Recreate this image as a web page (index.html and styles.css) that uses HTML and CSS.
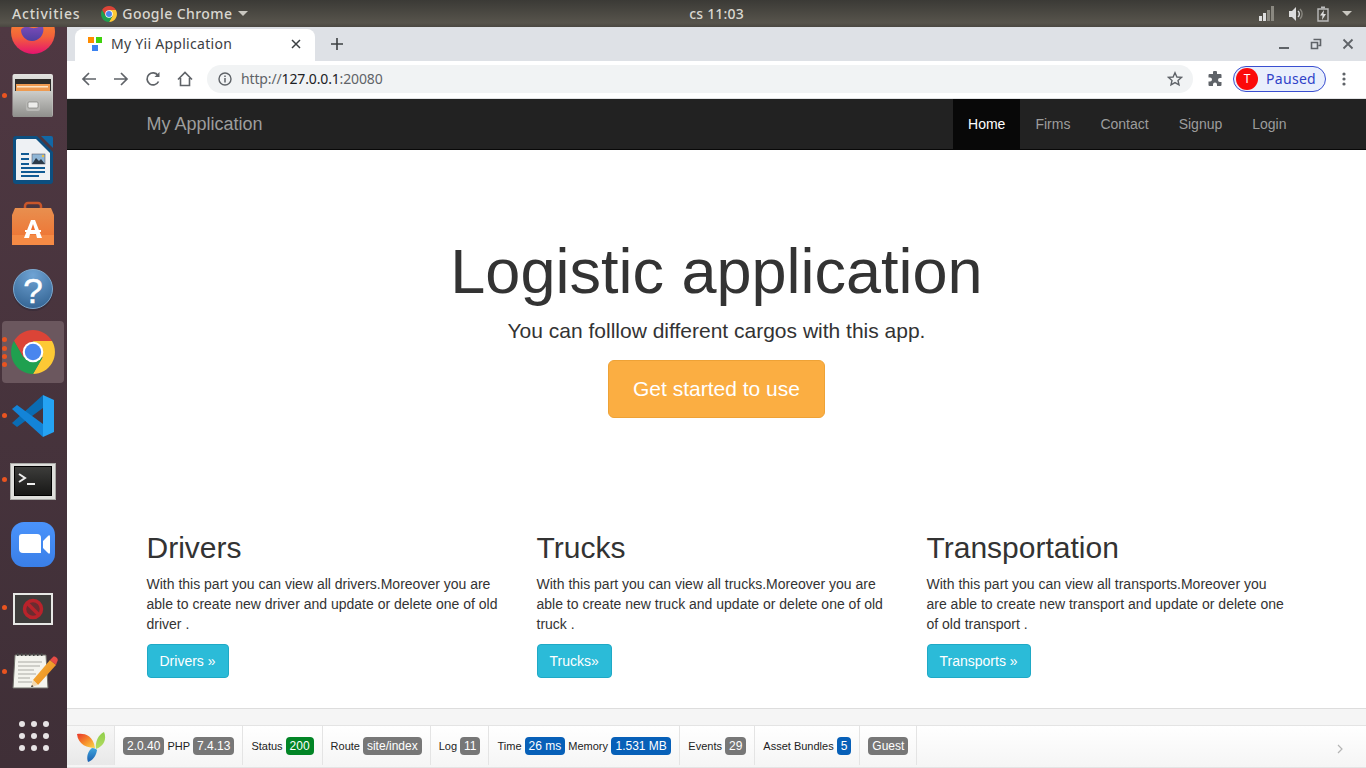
FILE: index.html
```html
<!DOCTYPE html>
<html lang="en">
<head>
<meta charset="utf-8">
<title>My Yii Application</title>
<link rel="stylesheet" href="styles.css">
</head>
<body>
<svg class="defs" width="0" height="0" aria-hidden="true">
  <defs>
    <symbol id="chrome" viewBox="11 10 44 44">
      <path fill="#db4437" d="M52 21A22 22 0 0 0 14 21L23.5 37.5 33 21Z"/>
      <path fill="#fdc935" d="M52 21A22 22 0 0 1 33 54L42.5 37.5 33 21Z"/>
      <path fill="#1fa04f" d="M33 54A22 22 0 0 1 14 21L23.5 37.5 42.5 37.5Z"/>
      <circle cx="33" cy="32" r="10.3" fill="#fff"/>
      <circle cx="33" cy="32" r="8.2" fill="#4a86ee"/>
    </symbol>
    <linearGradient id="ffx" x1="0" y1="0" x2="0" y2="1"><stop offset="0" stop-color="#f9a02a"/><stop offset=".6" stop-color="#f4623a"/><stop offset="1" stop-color="#e5136f"/></linearGradient>
    <linearGradient id="ffin" x1="0" y1="0" x2="0" y2="1"><stop offset="0" stop-color="#7a4bb8"/><stop offset="1" stop-color="#4f3fa0"/></linearGradient>
    <linearGradient id="frame" x1="0" y1="0" x2="0" y2="1"><stop offset="0" stop-color="#e2e2df"/><stop offset="1" stop-color="#a9a9a6"/></linearGradient>
    <linearGradient id="drawer" x1="0" y1="0" x2="0" y2="1"><stop offset="0" stop-color="#cdcdca"/><stop offset="1" stop-color="#8f8f8c"/></linearGradient>
    <linearGradient id="bag" x1="0" y1="0" x2="0" y2="1"><stop offset="0" stop-color="#e88f4f"/><stop offset="1" stop-color="#f0702f"/></linearGradient>
    <radialGradient id="help" cx=".5" cy=".15" r=".95"><stop offset="0" stop-color="#6fa3d4"/><stop offset="1" stop-color="#2f5f8e"/></radialGradient>
    <linearGradient id="term" x1="0" y1="0" x2="0" y2="1"><stop offset="0" stop-color="#3d3d3b"/><stop offset="1" stop-color="#171716"/></linearGradient>
    <linearGradient id="zoomg" x1="0" y1="0" x2="0" y2="1"><stop offset="0" stop-color="#4a93fb"/><stop offset="1" stop-color="#3a7fe8"/></linearGradient>
    <linearGradient id="pencil" x1="0" y1="0" x2="1" y2="1"><stop offset="0" stop-color="#f7b13c"/><stop offset="1" stop-color="#e98a1a"/></linearGradient>
  </defs>
</svg>

<header class="topbar">
  <div class="top-left">
    <span class="top-text activities">Activities</span>
    <span class="app-menu">
      <svg class="top-chrome" width="16" height="16"><use href="#chrome"/></svg>
      <span class="top-text app-name">Google Chrome</span>
      <span class="caret"></span>
    </span>
  </div>
  <span class="top-text clock">cs 11:03</span>
  <div class="top-right">
    <svg width="16" height="16" viewBox="0 0 16 16"><rect x="0" y="10" width="3" height="5" fill="#ddd"/><rect x="4" y="7" width="3" height="8" fill="#ddd"/><rect x="8" y="4" width="3" height="11" fill="#8a8880"/><rect x="12" y="0" width="3" height="15" fill="#8a8880"/></svg>
    <svg width="16" height="16" viewBox="0 0 16 16"><path fill="#ddd" d="M1 5h3l4-4v14l-4-4H1z"/><path fill="none" stroke="#ddd" stroke-width="1.4" d="M10 5a4 4 0 0 1 0 6"/><path fill="none" stroke="#8a8880" stroke-width="1.4" d="M12 3a7 7 0 0 1 0 10"/></svg>
    <svg width="12" height="16" viewBox="0 0 12 16"><path fill="none" stroke="#bbb" stroke-width="1.4" d="M1 3h10v12H1z"/><rect x="4" y="0.5" width="4" height="2" fill="#bbb"/><path fill="#ddd" d="M7 4 3 9.500h2.500L5 14l4-6H6.500z"/></svg>
    <span class="caret right-caret"></span>
  </div>
</header>

<div class="desktop">
  <nav class="dock">
    <div class="dock-inner">
      <div class="slot">
        <svg width="67" height="64"><circle cx="33" cy="32" r="22" fill="url(#ffx)"/><path fill="url(#ffin)" d="M21 30c3-5 8-3 11-2 4 1 9-3 11-1 2 6-3 14-11 14-6 0-11-5-11-11z"/></svg>
      </div>
      <div class="slot">
        <span class="pip pip-mid"></span>
        <svg width="67" height="64" viewBox="0 0 67 64"><rect x="12.500" y="10" width="40.500" height="43" rx="2" fill="url(#frame)"/><rect x="15" y="15" width="36" height="13" fill="#2d2c2a"/><rect x="16" y="20" width="34" height="7" fill="#ee9a50"/><rect x="17" y="22" width="31" height="1.500" fill="#fbe3c4"/><rect x="13" y="27" width="39" height="26" rx="1" fill="url(#drawer)"/><rect x="26" y="36" width="14" height="11" rx="2" fill="#b9b9b6"/><rect x="28" y="38" width="10" height="6" rx="1" fill="#ededeb" stroke="#6d6d6a" stroke-width=".6"/></svg>
      </div>
      <div class="slot">
        <svg width="67" height="64" viewBox="0 0 67 64"><path fill="#0d4f80" d="M16 8h21l16 16v29a3 3 0 0 1-3 3H16a3 3 0 0 1-3-3V11a3 3 0 0 1 3-3z"/><path fill="#eef1f4" d="M17 11h19l14 14v27H16V12z"/><path fill="#1268a6" d="M41 8h10a2 2 0 0 1 2 2v10z"/><path fill="#0f5a94" d="M21 25h8v2h-8zM21 30h8v2h-8zM21 35h8v2h-8zM21 39h24v2H21zM21 43h24v2H21zM21 47h18v2H21z"/><rect x="32" y="26" width="13" height="10" fill="#8fb6d6" stroke="#445"  stroke-width=".5"/><path fill="#2c3b4a" d="M32 36l4-6 3 3 2-2 4 5z"/><circle cx="43" cy="28" r="1.200" fill="#f0c040"/></svg>
      </div>
      <div class="slot">
        <svg width="67" height="64" viewBox="0 0 67 64"><path fill="none" stroke="#c9562a" stroke-width="2.500" d="M25 22v-8a3 3 0 0 1 3-3h10a3 3 0 0 1 3 3v8"/><path fill="url(#bag)" d="M15 16h36l3 7v30H12V23z"/><path fill="#f58a45" d="M12 43h42v10H12z"/><path fill="#fff" d="M31 28h4l7 18h-5l-1-4h-6l-1 4h-5z"/><path fill="#f0702f" d="M33 32l-2 6h4z"/><rect x="25" y="38" width="16" height="2" fill="#fff"/></svg>
      </div>
      <div class="slot">
        <svg width="67" height="64" viewBox="0 0 67 64"><circle cx="33" cy="35" r="20" fill="#1f1f2f" opacity=".3"/><circle cx="33" cy="33" r="19.500" fill="url(#help)" stroke="#7da9cf"/><text class="help-q" x="33" y="47" text-anchor="middle">?</text></svg>
      </div>
      <div class="slot slot-active">
        <span class="pip pip-a"></span><span class="pip pip-b"></span><span class="pip pip-c"></span><span class="pip pip-d"></span>
        <svg class="chrome-big" width="44" height="44"><use href="#chrome"/></svg>
      </div>
      <div class="slot">
        <span class="pip pip-mid"></span>
        <svg width="67" height="64" viewBox="0 0 67 64"><path fill="#0a6cb3" d="M43 11V24L17 43 12 39Z"/><path fill="#1384d8" d="M12 25 17 21 43 40V53Z"/><path fill="#25a3f3" d="M43 11 54 16V48L43 53Z"/></svg>
      </div>
      <div class="slot">
        <span class="pip pip-mid"></span>
        <svg width="67" height="64" viewBox="0 0 67 64"><rect x="10.500" y="15.500" width="45" height="36" fill="#dededb" stroke="#a9a9a6"/><rect x="14.500" y="18.500" width="37" height="29" fill="url(#term)" stroke="#000"/><path fill="none" stroke="#eee" stroke-width="2" d="M19 26l6 4-6 4"/><rect x="27" y="35" width="8" height="2" fill="#eee"/></svg>
      </div>
      <div class="slot">
        <svg width="67" height="64" viewBox="0 0 67 64"><rect x="11" y="10" width="44" height="45" rx="13" fill="url(#zoomg)"/><path fill="#fff" d="M19 25a3 3 0 0 1 3-3h15a4 4 0 0 1 4 4v15H23a4 4 0 0 1-4-4zM43 29l5-5c1-1 2-1 2 1v15c0 2-1 2-2 1l-5-5z"/></svg>
      </div>
      <div class="slot">
        <span class="pip pip-mid"></span>
        <svg width="67" height="64" viewBox="0 0 67 64"><rect x="13" y="17" width="40" height="32" fill="#e8e8e6"/><rect x="15" y="19" width="36" height="28" fill="#3e3c3b"/><circle cx="33" cy="33" r="8.500" fill="#6a2c30" stroke="#b8232b" stroke-width="3.500"/><path stroke="#b8232b" stroke-width="3.500" d="M27 27l12 12"/></svg>
      </div>
      <div class="slot">
        <span class="pip pip-mid"></span>
        <svg width="67" height="64" viewBox="0 0 67 64"><g transform="translate(0 2)"><path fill="#f4f4ee" stroke="#6e6e68" d="M15 13h31l2 33H13z"/><path stroke="#444" stroke-width="3" stroke-dasharray="1.500 2.500" d="M17 12.500h28"/><path stroke="#a9a9a3" stroke-width="1.200" d="M18 20h24M18 24h22M18 28h16M18 32h18M18 36h12M18 40h14"/><path fill="url(#pencil)" d="M33 38l17-20 6 5-18 20z"/><path fill="#e64b45" d="M50 18l3-3c1-1 3 0 4 1s1 3 0 4l-1 3z"/><path fill="#f2d9b0" d="M33 38l5 5-7 2z"/><path fill="#222" d="M31 45l1-2 1.500 1.500z"/></g></svg>
      </div>
      <div class="slot slot-grid">
        <span></span><span></span><span></span><span></span><span></span><span></span><span></span><span></span><span></span>
      </div>
    </div>
  </nav>

  <div class="browser">
    <div class="tabstrip">
      <div class="tab">
        <span class="favicon"><i class="fav-o"></i><i class="fav-g"></i><i class="fav-b"></i></span>
        <span class="tab-title">My Yii Application</span>
        <svg class="tab-close" width="10" height="10" viewBox="0 0 10 10"><path stroke="#3c4043" stroke-width="1.500" d="M1 1l8 8M9 1l-8 8"/></svg>
      </div>
      <svg class="new-tab" width="14" height="14" viewBox="0 0 14 14"><path stroke="#3c4043" stroke-width="1.600" d="M7 1v12M1 7h12"/></svg>
      <div class="win-controls">
        <svg width="12" height="12" viewBox="0 0 12 12"><path stroke="#5f6368" stroke-width="2" d="M1 10h10"/></svg>
        <svg width="12" height="12" viewBox="0 0 12 12"><path fill="none" stroke="#5f6368" stroke-width="1.600" d="M3.500 1.500h7v6h-2M1.500 4.500h6v6h-6z"/></svg>
        <svg width="12" height="12" viewBox="0 0 12 12"><path stroke="#5f6368" stroke-width="1.800" d="M1.500 1.500l9 9M10.500 1.500l-9 9"/></svg>
      </div>
    </div>
    <div class="toolbar">
      <svg class="tool" width="16" height="16" viewBox="0 0 16 16"><path fill="none" stroke="#5f6368" stroke-width="1.700" d="M15 8H2M8 2 2 8l6 6"/></svg>
      <svg class="tool" width="16" height="16" viewBox="0 0 16 16"><path fill="none" stroke="#5f6368" stroke-width="1.700" d="M1 8h13M8 2l6 6-6 6"/></svg>
      <svg class="tool" width="16" height="16" viewBox="0 0 16 16"><path fill="none" stroke="#5f6368" stroke-width="1.700" d="M13.500 10.500A6 6 0 1 1 13 4.500"/><path fill="#5f6368" d="M14.500 1v5h-5z"/></svg>
      <svg class="tool" width="16" height="16" viewBox="0 0 16 16"><path fill="none" stroke="#5f6368" stroke-width="1.600" d="M1 8.500 8 1.500l7 7M3.500 7v7.500h9V7"/></svg>
      <div class="omnibox">
        <svg class="info" width="14" height="14" viewBox="0 0 14 14"><circle cx="7" cy="7" r="6" fill="none" stroke="#5f6368" stroke-width="1.400"/><path stroke="#5f6368" stroke-width="1.500" d="M7 6v4.500M7 3.500v1.500"/></svg>
        <span class="url"><span class="url-dim">http://</span>127.0.0.1<span class="url-dim">:20080</span></span>
        <svg class="star" width="16" height="16" viewBox="0 0 16 16"><path fill="none" stroke="#5f6368" stroke-width="1.400" d="M8 1.800l1.900 4.200 4.500.4-3.400 3 1 4.500L8 11.600l-4 2.300 1-4.500-3.400-3 4.500-.4z"/></svg>
      </div>
      <svg class="puzzle" width="16" height="16" viewBox="0 0 16 16"><path fill="#5f6368" d="M6 1.500a2 2 0 0 1 4 0V3h3.500a1 1 0 0 1 1 1v3H13a2 2 0 0 0 0 4h1.500v3a1 1 0 0 1-1 1H10v-1.500a2 2 0 0 0-4 0V15H2.500a1 1 0 0 1-1-1v-3.500H3a2 2 0 0 0 0-4H1.500V4a1 1 0 0 1 1-1H6z"/></svg>
      <div class="profile"><span class="avatar">T</span><span class="paused">Paused</span></div>
      <svg class="kebab" width="4" height="14" viewBox="0 0 4 14"><circle cx="2" cy="2" r="1.600" fill="#5f6368"/><circle cx="2" cy="7" r="1.600" fill="#5f6368"/><circle cx="2" cy="12" r="1.600" fill="#5f6368"/></svg>
    </div>

    <main class="viewport">
      <div class="navbar">
        <div class="container nav-row">
          <a class="brand">My Application</a>
          <ul class="nav">
            <li class="active">Home</li>
            <li>Firms</li>
            <li>Contact</li>
            <li>Signup</li>
            <li>Login</li>
          </ul>
        </div>
      </div>

      <section class="jumbotron">
        <h1>Logistic application</h1>
        <p class="lead">You can folllow different cargos with this app.</p>
        <a class="btn btn-lg">Get started to use</a>
      </section>

      <section class="container columns">
        <div class="col">
          <h2>Drivers</h2>
          <p>With this part you can view all drivers.Moreover you are able to create new driver and update or delete one of old driver .</p>
          <a class="btn btn-info">Drivers »</a>
        </div>
        <div class="col">
          <h2>Trucks</h2>
          <p>With this part you can view all trucks.Moreover you are able to create new truck and update or delete one of old truck .</p>
          <a class="btn btn-info">Trucks»</a>
        </div>
        <div class="col">
          <h2>Transportation</h2>
          <p>With this part you can view all transports.Moreover you are able to create new transport and update or delete one of old transport .</p>
          <a class="btn btn-info">Transports »</a>
        </div>
      </section>

      <div class="footer"></div>

      <div class="debug">
        <div class="dbg-block dbg-logo">
          <svg width="32" height="32" viewBox="0 0 32 32">
            <defs>
              <linearGradient id="y1" x1="0" y1="0" x2="1" y2="1"><stop offset="0" stop-color="#e8352c"/><stop offset=".55" stop-color="#f7902a"/><stop offset="1" stop-color="#f9d84e"/></linearGradient>
              <linearGradient id="y2" x1="0" y1="0" x2="0" y2="1"><stop offset="0" stop-color="#8fce4a"/><stop offset="1" stop-color="#b4dc62"/></linearGradient>
              <linearGradient id="y3" x1="0" y1="0" x2="0" y2="1"><stop offset="0" stop-color="#3fa5dd"/><stop offset="1" stop-color="#1a5fb0"/></linearGradient>
            </defs>
            <path fill="url(#y1)" d="M2 3c6-1 16 0 18 14-7 0-17-3-18-14z"/>
            <path fill="url(#y2)" d="M29 1c3 7 0 14-8 17-1-7 2-14 8-17z"/>
            <path fill="url(#y3)" d="M17 17c3 0 4 1 5 2-1 6-4 10-9 12-2-5 0-11 4-14z"/>
          </svg>
        </div>
        <div class="dbg-block"><span class="lbl">2.0.40</span><span class="dbg-text">PHP</span><span class="lbl">7.4.13</span></div>
        <div class="dbg-block"><span class="dbg-text">Status</span><span class="lbl lbl-green">200</span></div>
        <div class="dbg-block"><span class="dbg-text">Route</span><span class="lbl">site/index</span></div>
        <div class="dbg-block"><span class="dbg-text">Log</span><span class="lbl">11</span></div>
        <div class="dbg-block"><span class="dbg-text">Time</span><span class="lbl lbl-blue">26 ms</span><span class="dbg-text">Memory</span><span class="lbl lbl-blue lbl-wide">1.531 MB</span></div>
        <div class="dbg-block"><span class="dbg-text">Events</span><span class="lbl">29</span></div>
        <div class="dbg-block"><span class="dbg-text">Asset Bundles</span><span class="lbl lbl-blue">5</span></div>
        <div class="dbg-block"><span class="lbl">Guest</span></div>
        <svg class="dbg-chevron" width="7" height="10" viewBox="0 0 7 10"><path fill="none" stroke="#b5b5b5" stroke-width="1.200" d="M1 1l4 4-4 4"/></svg>
      </div>
    </main>
  </div>
</div>
</body>
</html>
```

FILE: styles.css
```css
* { box-sizing: border-box; }
html, body { margin: 0; height: 100%; }
body {
  width: 1366px;
  height: 768px;
  overflow: hidden;
  display: flex;
  flex-direction: column;
  font-family: "Liberation Sans", Arial, sans-serif;
  font-size: 14px;
  line-height: 20px;
  color: #333;
}
.defs { display: block; height: 0; }

/* Ubuntu top bar */
.topbar {
  height: 27px;
  flex: none;
  display: grid;
  grid-template-columns: 1fr auto 622px;
  align-items: center;
  background: linear-gradient(#3b3a36, #57544c 85%, #4a4741);
}
.top-left { display: flex; align-items: center; padding-left: 12px; }
.top-text { font-family: "Noto Sans", sans-serif; font-weight: 500; font-size: 14px; color: #d9d7d0; letter-spacing: .2px; }
.activities { letter-spacing: .8px; }
.app-name { letter-spacing: .42px; }
.app-menu { display: flex; align-items: center; margin-left: 21px; }
.top-chrome { margin-right: 5px; }
.caret { width: 0; height: 0; border: 5px solid transparent; border-top: 5px solid #c9c7c0; border-bottom: 0; margin-left: 6px; }
.clock { text-align: center; }
.top-right { display: flex; align-items: center; justify-content: flex-end; gap: 13px; padding-right: 14px; }
.right-caret { margin-left: 0; }

/* Dock */
.desktop { flex: 1; display: flex; min-height: 0; }
.dock { width: 67px; flex: none; overflow: hidden; background: linear-gradient(#4f3842, #3f2f37); }
.dock-inner { margin-top: -27px; }
.slot { position: relative; height: 64px; }
.slot svg { display: block; }
.help-q { font-family: "Liberation Sans", sans-serif; font-size: 35px; fill: #fff; stroke: #fff; stroke-width: .5px; }
.slot-active::before {
  content: "";
  position: absolute;
  left: 2px; top: 1px;
  width: 62px; height: 62px;
  border-radius: 4px;
  background: #6b575e;
}
.chrome-big { position: absolute; left: 11px; top: 10px; }
.pip { position: absolute; left: 2px; width: 5px; height: 5px; border-radius: 50%; background: #e95420; z-index: 1; }
.pip-mid { top: 29px; }
.pip-a { top: 17px; }
.pip-b { top: 26px; }
.pip-c { top: 34px; }
.pip-d { top: 42px; }
.slot-grid {
  display: grid;
  grid-template-columns: repeat(3, 6px);
  grid-auto-rows: 6px;
  gap: 6px;
  justify-content: center;
  align-content: center;
}
.slot-grid span { border-radius: 50%; background: #e6e3e4; }

/* Chrome */
.browser { flex: 1; min-width: 0; display: flex; flex-direction: column; }
.tabstrip { height: 34px; flex: none; display: flex; align-items: flex-end; background: #dee1e6; padding-left: 8px; }
.tab {
  position: relative;
  width: 240px;
  height: 32px;
  display: flex;
  align-items: center;
  padding: 0 14px 2px 13px;
  background: #fff;
  border-radius: 8px 8px 0 0;
}
.favicon { position: relative; width: 14px; height: 14px; flex: none; }
.favicon i { position: absolute; width: 6px; height: 6px; }
.fav-o { left: 0; top: 0; background: #ff8c00; }
.fav-g { right: 0; top: 0; background: #3fd20d; }
.fav-b { left: 4px; bottom: 0; background: #3b82f0; }
.tab-title { flex: 1; margin-left: 9px; font-family: "Noto Sans", sans-serif; font-size: 14px; letter-spacing: .28px; color: #3c4043; }
.new-tab { margin: 0 0 10px 15px; }
.win-controls { margin-left: auto; display: flex; gap: 20px; padding-right: 12px; align-self: center; }
.toolbar { height: 38px; flex: none; display: flex; align-items: center; background: #fff; border-bottom: 1px solid #e2e3e5; padding: 0 0 1px 14px; }
.tool { margin-right: 16px; flex: none; }
.omnibox {
  width: 986px;
  height: 28px;
  margin-left: -2px;
  display: flex;
  align-items: center;
  padding: 0 10px 0 11px;
  background: #f1f3f4;
  border-radius: 14px;
  flex: none;
}
.info { flex: none; }
.url { flex: 1; margin-left: 9px; font-family: "Noto Sans", sans-serif; font-size: 14px; letter-spacing: -.14px; color: #202124; }
.url-dim { color: #5f6368; }
.puzzle { margin-left: 14px; flex: none; }
.profile {
  width: 93px;
  height: 26px;
  margin-left: 10px;
  display: flex;
  align-items: center;
  flex: none;
  padding-left: 2px;
  border: 1px solid #3a4fd0;
  border-radius: 13px;
  background: #e9effc;
}
.avatar {
  width: 22px; height: 22px;
  border-radius: 50%;
  background: #fb0a0a;
  color: #fff;
  font-family: "Noto Sans", sans-serif;
  font-size: 12px;
  line-height: 22px;
  text-align: center;
}
.paused { margin-left: 8px; font-family: "Noto Sans", sans-serif; font-size: 14px; letter-spacing: .3px; color: #2f42c8; }
.kebab { margin-left: 16px; flex: none; }

/* Page */
.viewport { flex: 1; min-height: 0; display: flex; flex-direction: column; background: #fff; overflow: hidden; }
.container { width: 1170px; margin: 0 auto; padding: 0 15px; }
.navbar { height: 51px; flex: none; background: #222; border-bottom: 1px solid #080808; }
.nav-row { display: flex; justify-content: space-between; padding-right: 0; }
.brand { font-size: 18px; line-height: 50px; color: #9d9d9d; }
.nav { display: flex; list-style: none; margin: 0; padding: 0; }
.nav li { padding: 15px; color: #9d9d9d; }
.nav li.active { color: #fff; background: #080808; }

.jumbotron { padding: 87px 0 113px; text-align: center; }
h1 { margin: 0 0 10px; font-size: 63px; line-height: 69px; font-weight: 500; color: #333; }
.lead { margin: 0 0 14px; font-size: 21px; line-height: 30px; font-weight: 300; }
.btn { display: inline-block; border: 1px solid transparent; border-radius: 4px; padding: 6px 12px; color: #fff; }
.btn-lg { font-size: 21px; line-height: 28px; padding: 14px 24px; border-radius: 6px; background: #fbae42; border-color: #eea236; }
.btn-info { background: #2bbbd8; border-color: #1fa9c6; }

.columns { display: grid; grid-template-columns: repeat(3, 390px); padding: 0; margin-bottom: 30px; }
.col { padding: 0 15px; }
h2 { margin: 0 0 10px; font-size: 30px; line-height: 33px; font-weight: 500; }
.col p { margin: 0 0 10px; }

.footer { height: 17px; flex: none; background: #f5f5f5; border-top: 1px solid #ddd; }

/* Yii debug toolbar */
.debug {
  height: 43px;
  flex: none;
  display: flex;
  align-items: stretch;
  position: relative;
  padding-bottom: 2px;
  background: linear-gradient(#fff, #f5f5f5);
  border-top: 1px solid #e4e4e4;
  border-bottom: 1px solid #e4e4e4;
  font-size: 11px;
  color: #222;
}
.dbg-block { display: flex; align-items: center; gap: 3px; padding: 1px 8px 0; border-right: 1px solid #e4e4e4; }
.dbg-logo { width: 48px; justify-content: center; padding: 2px 0 0; background: linear-gradient(#f7f7f7, #e8e8e8); }
.dbg-text { white-space: nowrap; }
.lbl { padding: 0 4px; height: 18px; line-height: 18px; border-radius: 4px; background: #777; color: #fff; font-size: 12px; white-space: nowrap; }
.lbl-wide { padding: 0 4.5px; }
.lbl-green { background: #028526; }
.lbl-blue { background: #0760b8; }
.dbg-chevron { position: absolute; right: 22px; top: 18px; }
```
